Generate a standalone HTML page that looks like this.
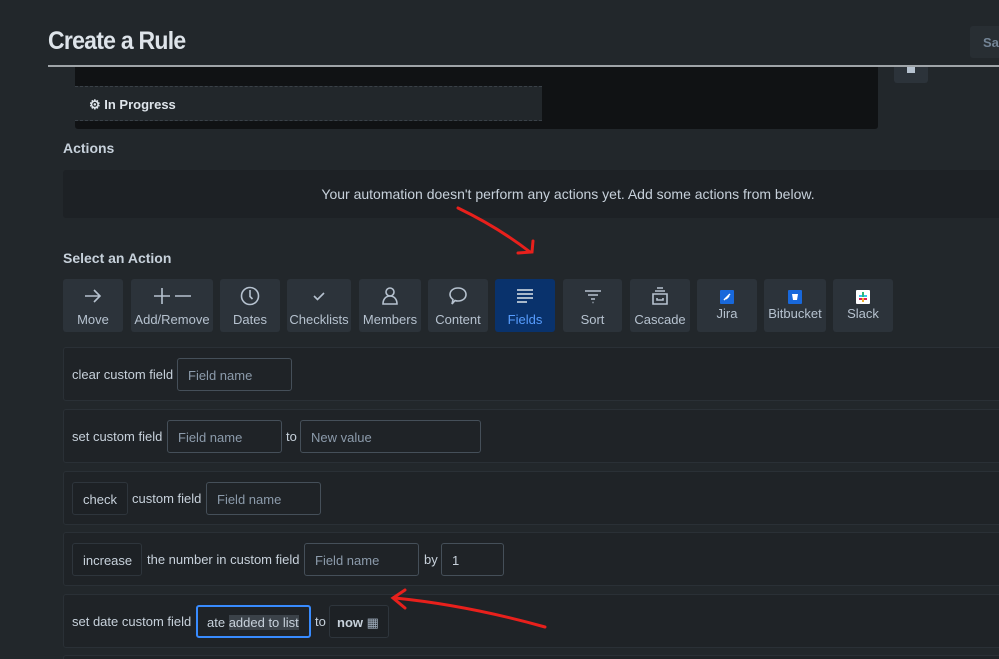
<!DOCTYPE html>
<html style="overflow:hidden;height:659px"><head><style>
*{box-sizing:border-box;margin:0;padding:0}
body{width:999px;height:659px;overflow:hidden;background:#22272b;font-family:"Liberation Sans",sans-serif;color:#b6c2cf;position:relative}
.a{position:absolute}
.btn{position:absolute;top:279px;height:53px;background:#2c333a;border-radius:3px;text-align:center;font-size:13px;color:#b6c2cf}
.btn svg{position:absolute;left:50%;transform:translateX(-50%);top:6px}
.btn span{position:absolute;left:0;right:0;top:33px}
.btn.s span{top:27px}
.row{position:absolute;left:63px;width:950px;height:54px;background:#1f2327;border:1px solid #2a3036;border-radius:3px;font-size:13px;color:#c7d1db;white-space:nowrap}
.t{position:absolute;top:19px}
.in{position:absolute;top:10px;height:33px;border:1px solid #454f59;border-radius:3px;color:#8c9bab;padding:9px 10px;font-size:13px;background:#1f2327;white-space:nowrap;overflow:hidden}
.bx{position:absolute;top:10px;height:33px;border:1px solid #2e353c;border-radius:3px;color:#c7d1db;padding:9px 10px;font-size:13px;background:#1d2125;white-space:nowrap}
</style></head><body>
<div class="a" style="left:48px;top:27px;font-size:25px;font-weight:bold;color:#dee4ea;letter-spacing:-0.8px;transform:scaleX(0.92);transform-origin:left">Create a Rule</div>
<div class="a" style="left:970px;top:26px;width:40px;height:32px;background:#282e33;border-radius:3px;font-size:13px;color:#738496;padding:9px 13px;font-weight:bold">Sa</div>
<div class="a" style="left:75px;top:67px;width:803px;height:62px;background:#101214;border-radius:0 0 3px 3px"></div>
<div class="a" style="left:75px;top:86px;width:467px;height:35px;background:#22272b;border-top:1px dashed #3a4148;border-bottom:1px dashed #3a4148"></div>
<div class="a" style="left:89px;top:97px;font-size:13px;font-weight:bold;color:#dee4ea">⚙ In Progress</div>
<div class="a" style="left:894px;top:66px;width:34px;height:17px;background:#2c333a;border-radius:0 0 3px 3px"><div style="margin:1px auto;width:8px;height:6px;background:#b6c2cf"></div></div>
<div class="a" style="left:48px;top:65px;width:951px;height:2px;background:#9fa4a8"></div>
<div class="a" style="left:63px;top:140px;font-size:14px;font-weight:bold;color:#c7d1db">Actions</div>
<div class="a" style="left:63px;top:170px;width:940px;height:48px;background:#1d2125;border-radius:3px;text-align:center;font-size:14px;line-height:48px;color:#c7d1db;padding-left:70px">Your automation doesn't perform any actions yet. Add some actions from below.</div>
<div class="a" style="left:63px;top:250px;font-size:14px;font-weight:bold;color:#c7d1db">Select an Action</div>

<div class="btn" style="left:63px;width:60px"><svg width="22" height="22" viewBox="0 0 22 22" fill="none" stroke="#b6c2cf" stroke-width="1.6"><path d="M3 11h15M12 5l6 6-6 6"/></svg><span>Move</span></div>
<div class="btn" style="left:131px;width:82px"><svg width="40" height="22" viewBox="0 0 40 22" fill="none" stroke="#b6c2cf" stroke-width="1.6"><path d="M2 11h16M10 3v16M23 11h16"/></svg><span>Add/Remove</span></div>
<div class="btn" style="left:220px;width:60px"><svg width="22" height="22" viewBox="0 0 22 22" fill="none" stroke="#b6c2cf" stroke-width="1.6"><circle cx="11" cy="11" r="8.5"/><path d="M11 5v6.5l2.5 2.5"/></svg><span>Dates</span></div>
<div class="btn" style="left:287px;width:64px"><svg width="22" height="22" viewBox="0 0 22 22" fill="none" stroke="#b6c2cf" stroke-width="1.6"><path d="M6 11l3.5 3.5L16 8"/></svg><span>Checklists</span></div>
<div class="btn" style="left:359px;width:62px"><svg width="22" height="22" viewBox="0 0 22 22" fill="none" stroke="#b6c2cf" stroke-width="1.6"><circle cx="11" cy="7" r="4"/><path d="M4 19c0-5 3-8 7-8s7 3 7 8z"/></svg><span>Members</span></div>
<div class="btn" style="left:428px;width:60px"><svg width="22" height="22" viewBox="0 0 22 22" fill="none" stroke="#b6c2cf" stroke-width="1.6"><path d="M11 3c5 0 8 3 8 6.5S16 16 11 16c-1 0-2 0-3-.5L5 19l1-4.5C4 13 3 11.5 3 9.5 3 6 6 3 11 3z"/></svg><span>Content</span></div>
<div class="btn" style="left:495px;width:60px;background:#09326c;color:#579dff"><svg width="22" height="22" viewBox="0 0 22 22" fill="none" stroke="#dee4ea" stroke-width="1.6"><path d="M3 5h16M3 9h16M3 13h16M3 17h10"/></svg><span>Fields</span></div>
<div class="btn" style="left:563px;width:59px"><svg width="22" height="22" viewBox="0 0 22 22" fill="none" stroke="#b6c2cf" stroke-width="1.6"><path d="M3 6h16M6 10h10M9 14h4M10.5 17.5h1"/></svg><span>Sort</span></div>
<div class="btn" style="left:630px;width:60px"><svg width="22" height="22" viewBox="0 0 22 22" fill="none" stroke="#b6c2cf" stroke-width="1.6"><path d="M8 3h6M6 6h10M4 9h14v10H4zM8 13v2h6v-2"/></svg><span>Cascade</span></div>
<div class="btn s" style="left:697px;width:60px"><svg width="14" height="14" viewBox="0 0 14 14" style="top:11px"><rect width="14" height="14" rx="1" fill="#1868db"/><path d="M4 10l6-6M6 9l3-3" stroke="#fff" stroke-width="1.5"/></svg><span>Jira</span></div>
<div class="btn s" style="left:764px;width:62px"><svg width="14" height="14" viewBox="0 0 14 14" style="top:11px"><rect width="14" height="14" rx="1" fill="#1868db"/><path d="M4 4h6l-1 6H5z" fill="#fff"/></svg><span>Bitbucket</span></div>
<div class="btn s" style="left:833px;width:60px"><svg width="14" height="14" viewBox="0 0 14 14" style="top:11px"><rect width="14" height="14" rx="1" fill="#fff"/><rect x="3" y="5" width="8" height="2" fill="#36c5f0"/><rect x="6" y="2" width="2" height="5" fill="#2eb67d"/><rect x="3" y="8" width="8" height="2" fill="#e01e5a"/><rect x="6" y="8" width="2" height="4" fill="#ecb22e"/></svg><span>Slack</span></div>

<div class="row" style="top:347px"><span class="t" style="left:8px">clear custom field</span><div class="in" style="left:113px;width:115px">Field name</div></div>
<div class="row" style="top:409px"><span class="t" style="left:8px">set custom field</span><div class="in" style="left:103px;width:115px">Field name</div><span class="t" style="left:222px">to</span><div class="in" style="left:236px;width:181px">New value</div></div>
<div class="row" style="top:471px"><div class="bx" style="left:8px;width:56px">check</div><span class="t" style="left:68px">custom field</span><div class="in" style="left:142px;width:115px">Field name</div></div>
<div class="row" style="top:532px"><div class="bx" style="left:8px;width:70px">increase</div><span class="t" style="left:83px">the number in custom field</span><div class="in" style="left:240px;width:115px">Field name</div><span class="t" style="left:360px">by</span><div class="in" style="left:377px;width:63px;color:#c7d1db">1</div></div>
<div class="row" style="top:594px"><span class="t" style="left:8px">set date custom field</span><div class="in" style="left:132px;width:115px;border:2px solid #388bff;color:#c7d1db;padding:8px 9px">ate <span style="background:#3b4249">added to list</span></div><span class="t" style="left:251px">to</span><div class="bx" style="left:265px;width:60px;font-weight:bold;padding:9px 7px">now <span style="font-weight:normal;color:#9fadbc">▦</span></div></div>
<div class="row" style="top:655px;height:10px"></div>

<svg class="a" style="left:0;top:0" width="999" height="659" fill="none" stroke="#e8201c" stroke-width="3" stroke-linecap="round">
<path d="M458 208c25 12 50 27 72 44"/><path d="M518 253l14 -1 1 -11"/>
<path d="M545 627c-50-14-100-24-150-29"/><path d="M405 590l-12 8 12 10"/>
</svg>
</body></html>
